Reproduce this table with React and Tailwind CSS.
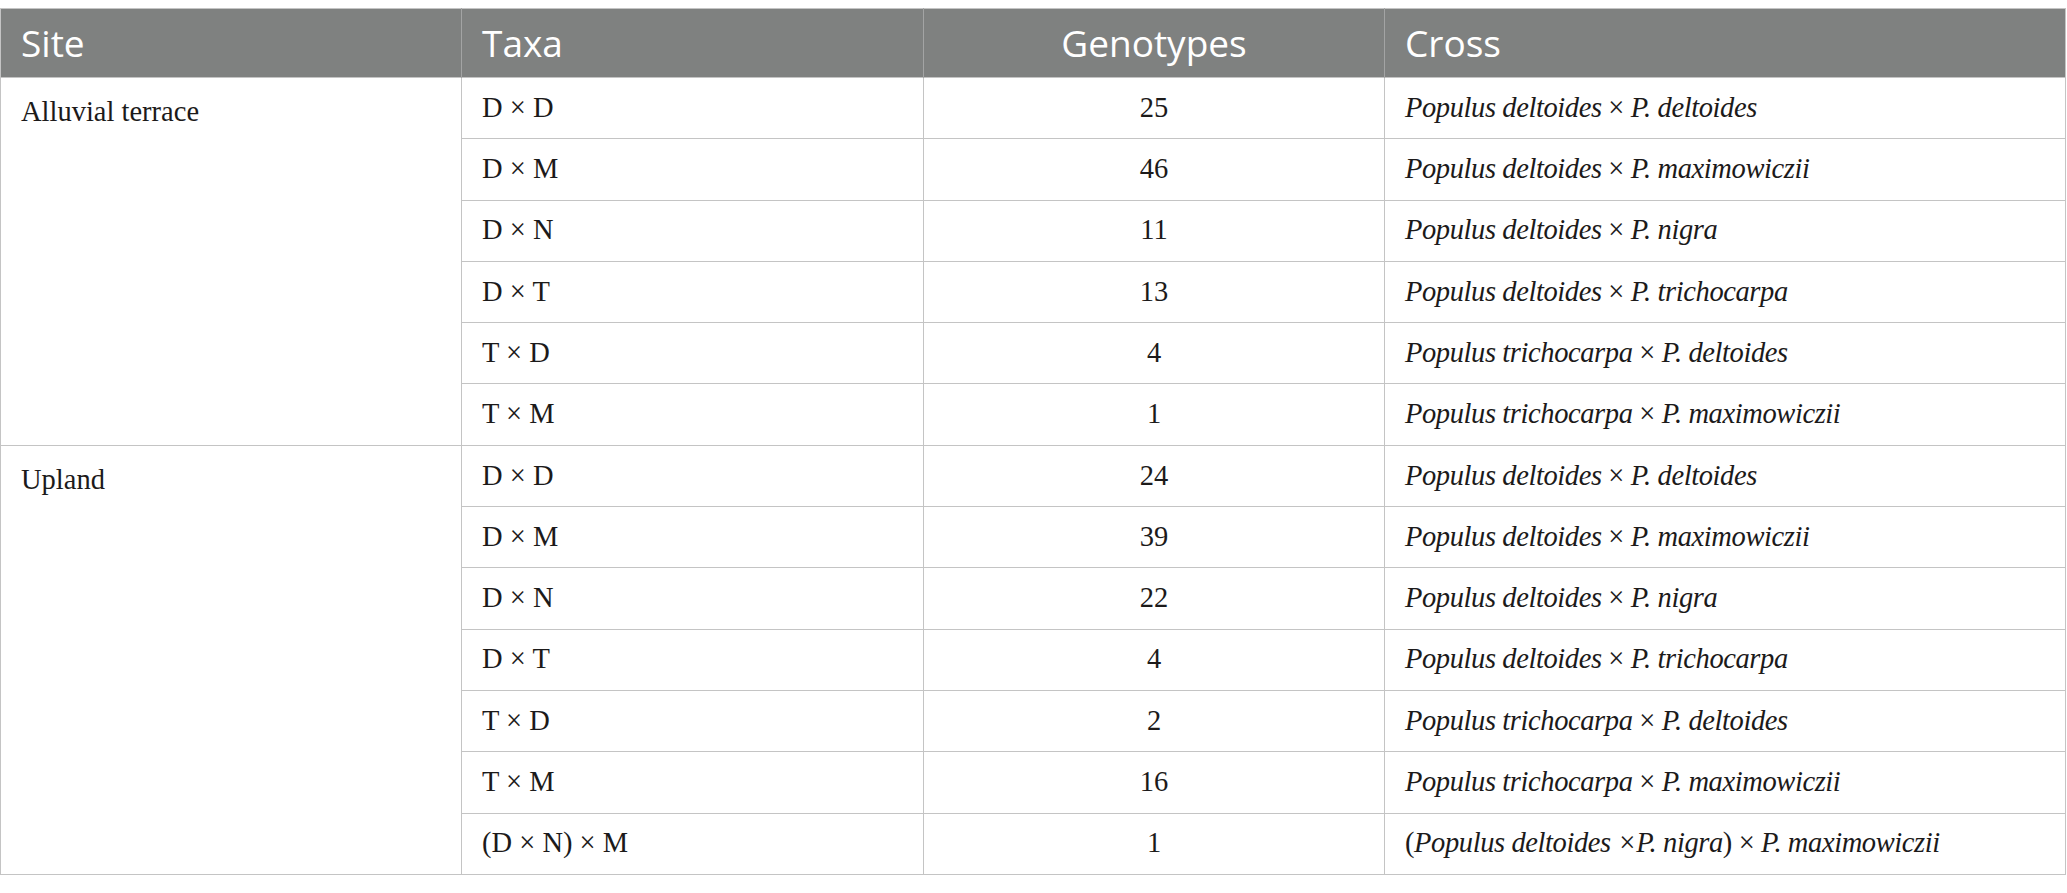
import React from 'react';

const rows = [
    { site: 'Alluvial terrace', span: 6, taxa: 'D × D', n: 25, cross: ['deltoides', 'deltoides'] },
    { taxa: 'D × M', n: 46, cross: ['deltoides', 'maximowiczii'] },
    { taxa: 'D × N', n: 11, cross: ['deltoides', 'nigra'] },
    { taxa: 'D × T', n: 13, cross: ['deltoides', 'trichocarpa'] },
    { taxa: 'T × D', n: 4, cross: ['trichocarpa', 'deltoides'] },
    { taxa: 'T × M', n: 1, cross: ['trichocarpa', 'maximowiczii'] },
    { site: 'Upland', span: 7, taxa: 'D × D', n: 24, cross: ['deltoides', 'deltoides'] },
    { taxa: 'D × M', n: 39, cross: ['deltoides', 'maximowiczii'] },
    { taxa: 'D × N', n: 22, cross: ['deltoides', 'nigra'] },
    { taxa: 'D × T', n: 4, cross: ['deltoides', 'trichocarpa'] },
    { taxa: 'T × D', n: 2, cross: ['trichocarpa', 'deltoides'] },
    { taxa: 'T × M', n: 16, cross: ['trichocarpa', 'maximowiczii'] },
    { taxa: '(D × N) × M', n: 1, special: true },
];

const cell = 'border border-[#c4c4c4] h-[61.3px] px-[20px] align-middle';

function Cross({ row }) {
    if (row.special) {
        return (
            <>
                (<i>Populus deltoides ×P. nigra</i>) × <i>P. maximowiczii</i>
            </>
        );
    }
    return (
        <>
            <i>Populus {row.cross[0]}</i> × <i>P. {row.cross[1]}</i>
        </>
    );
}

export default function App() {
    return (
        <div className="w-[2067px] h-[893px] bg-white pt-[8px]">
            <table className="w-[2066px] border-collapse table-fixed">
                <colgroup>
                    <col className="w-[461px]" />
                    <col className="w-[462px]" />
                    <col className="w-[461px]" />
                    <col />
                </colgroup>
                <thead>
                    <tr className="bg-[#7f8180] text-white font-['Open_Sans',sans-serif] text-[37px]">
                        <th className="h-[69px] px-[20px] font-normal text-left border-t border-t-[#c4c4c4] border-l border-l-[#c4c4c4] border-r border-r-[#a3a4a4]">Site</th>
                        <th className="h-[69px] px-[20px] font-normal text-left border-t border-t-[#c4c4c4] border-r border-r-[#a3a4a4]">Taxa</th>
                        <th className="h-[69px] px-[20px] font-normal text-center border-t border-t-[#c4c4c4] border-r border-r-[#a3a4a4]">Genotypes</th>
                        <th className="h-[69px] px-[20px] font-normal text-left border-t border-t-[#c4c4c4] border-r border-r-[#c4c4c4]">Cross</th>
                    </tr>
                </thead>
                <tbody className="font-['Liberation_Serif',serif] text-[28.5px] text-[#1c1a1a]">
                    {rows.map((row, i) => (
                        <tr key={i}>
                            {row.site && (
                                <td rowSpan={row.span} className="border border-[#c4c4c4] px-[20px] pt-[13px] align-top text-left">
                                    {row.site}
                                </td>
                            )}
                            <td className={cell}>{row.taxa}</td>
                            <td className={cell + ' text-center'}>{row.n}</td>
                            <td className={cell + ' tracking-[-0.4px]'}><Cross row={row} /></td>
                        </tr>
                    ))}
                </tbody>
            </table>
        </div>
    );
}
